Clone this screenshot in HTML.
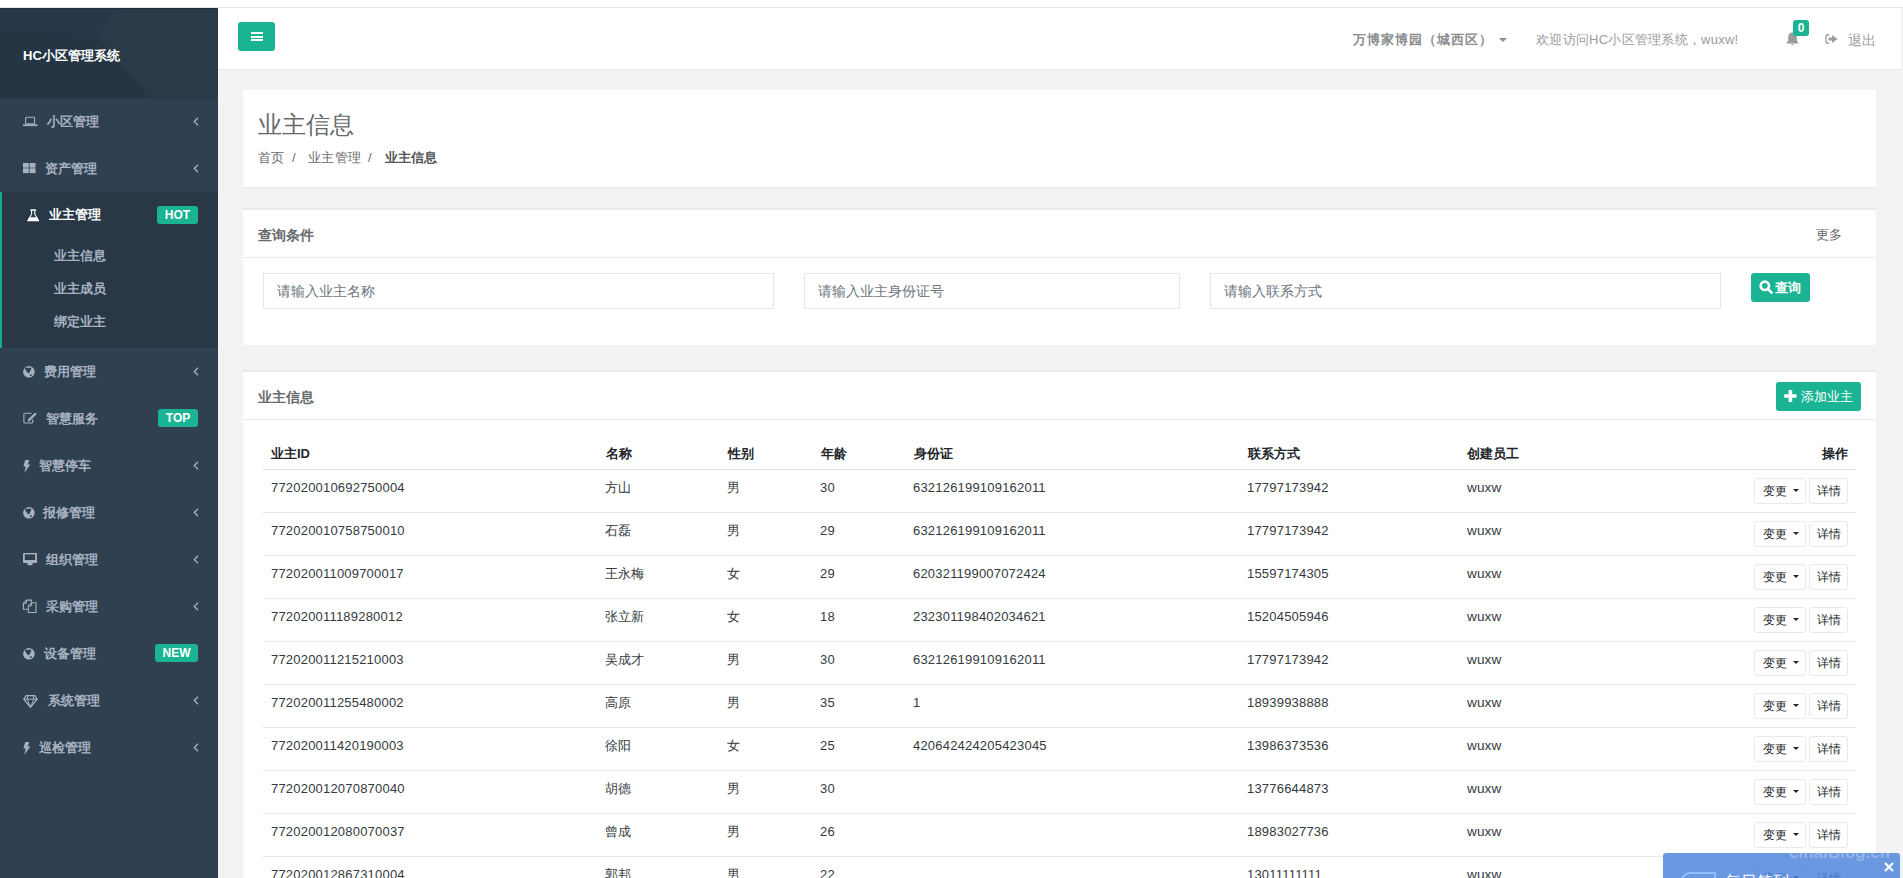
<!DOCTYPE html>
<html><head><meta charset="utf-8">
<style>
*{box-sizing:border-box;margin:0;padding:0}
html,body{width:1903px;height:878px;overflow:hidden}
body{background:#f3f3f4;font-family:"Liberation Sans",sans-serif;font-size:13px;color:#676a6c;position:relative}
.abs{position:absolute}
#topstrip{left:0;top:0;width:1903px;height:8px;background:#fff;border-bottom:1px solid #e3e5e8}
#side{left:0;top:8px;width:218px;height:870px;background:#2f4050;border-top:1px solid #1d2d3b}
#side .hdr{position:absolute;left:0;top:0;width:218px;height:90px;background:#273747;overflow:hidden}
.badge{position:absolute;height:18px;background:#1ab394;color:#fff;border-radius:3px;font-size:12px;font-weight:bold;text-align:center;line-height:18px}
#active{position:absolute;left:0;top:192px;width:218px;height:156px;background:#293846;border-left:2px solid #19aa8d}
.si{position:absolute;line-height:0}
.st{position:absolute;color:#a7b1c2;font-weight:bold;font-size:13px;line-height:18px;white-space:nowrap}
#header{left:218px;top:8px;width:1683px;height:62px;background:#fff;border-bottom:1px solid #e7eaec}
#minbtn{position:absolute;left:20px;top:14px;width:37px;height:29px;background:#1ab394;border-radius:3px}
#minbtn i{position:absolute;left:12.5px;width:12px;height:2px;background:#fff}
.card{position:absolute;left:243px;width:1633px;background:#fff}
.tx{position:absolute;white-space:nowrap;line-height:18px}
.th{position:absolute;white-space:nowrap;line-height:18px;font-weight:bold;color:#212529;font-size:13px}
.td{position:absolute;white-space:nowrap;line-height:18px;color:#343a40;font-size:13px;letter-spacing:0.2px}
.hl{position:absolute;left:263px;width:1593px;height:1px;background:#e7eaec}
.bw{position:absolute;height:26px;border:1px solid #e7eaec;border-radius:3px;background:#fff}
.bt{position:absolute;top:3px;line-height:18px;font-size:12px;color:#212529}
.caret{position:absolute;top:10px;width:0;height:0;border-left:3.5px solid transparent;border-right:3.5px solid transparent;border-top:3.5px solid #212529}
.input{position:absolute;top:273px;height:36px;border:1px solid #e5e6e7;background:#fff}
.input span{position:absolute;left:13px;top:8px;font-size:14px;line-height:18px;color:#6c757d;white-space:nowrap}
.btn{position:absolute;height:29px;background:#1ab394;border-radius:3px;color:#fff}
</style></head><body>
<div id="topstrip" class="abs"></div>
<div id="side" class="abs">
  <div class="hdr"><svg class="abs" style="left:0;top:0" width="218" height="90"><path d="M115 0H218V90H150L97 28Z" fill="#293a49"/><path d="M0 20C40 22 70 25 97 28L150 90H0Z" fill="#253544"/></svg><div class="tx" style="left:23px;top:38px;color:#fff;font-weight:bold">HC小区管理系统</div></div>
</div>
<div class="si" style="left:23px;top:116px"><svg width="15" height="11" viewBox="0 0 15 11"><rect x="2.6" y="1.3" width="9" height="6.6" rx="0.9" fill="none" stroke="#a7b1c2" stroke-width="1.1"/><rect x="0" y="8.3" width="14.4" height="1.8" fill="#a7b1c2"/></svg></div>
<div class="st" style="left:47px;top:113px">小区管理</div>
<div class="si" style="left:193px;top:117px"><svg width="6" height="9" viewBox="0 0 6 9"><path d="M5 0.8L1.3 4.5 5 8.2" fill="none" stroke="#a7b1c2" stroke-width="1.3"/></svg></div>
<div class="si" style="left:23px;top:163px"><svg width="13" height="11" viewBox="0 0 13 11"><rect x="0" y="0" width="5.8" height="4.7" fill="#a7b1c2"/><rect x="6.6" y="0" width="5.9" height="4.7" fill="#a7b1c2"/><rect x="0" y="5.3" width="5.8" height="4.8" fill="#a7b1c2"/><rect x="6.6" y="5.3" width="5.9" height="4.8" fill="#a7b1c2"/></svg></div>
<div class="st" style="left:45px;top:160px">资产管理</div>
<div class="si" style="left:193px;top:164px"><svg width="6" height="9" viewBox="0 0 6 9"><path d="M5 0.8L1.3 4.5 5 8.2" fill="none" stroke="#a7b1c2" stroke-width="1.3"/></svg></div>
<div class="si" style="left:23px;top:366px"><svg width="12" height="12" viewBox="0 0 12 12"><circle cx="5.9" cy="5.8" r="5.8" fill="#a7b1c2"/><path d="M1.9 2.2C2.6 1.2 4 1.3 4.9 2.1 5.8 1.3 7.3 1.1 8.2 1.9 8.4 3.4 7.2 5.4 5.8 7.6 4.3 6 2.3 4.3 1.9 2.2Z M7 8.5L8.9 8.2 8.5 9.9 7 10.1Z" fill="#2f4050"/></svg></div>
<div class="st" style="left:43.5px;top:363px">费用管理</div>
<div class="si" style="left:193px;top:367px"><svg width="6" height="9" viewBox="0 0 6 9"><path d="M5 0.8L1.3 4.5 5 8.2" fill="none" stroke="#a7b1c2" stroke-width="1.3"/></svg></div>
<div class="si" style="left:23px;top:412px"><svg width="14" height="12" viewBox="0 0 14 12"><path d="M8.6 1.2H2Q0.9 1.2 0.9 2.3V9.9Q0.9 11 2 11H8.6Q9.7 11 9.7 9.9V7.2" fill="none" stroke="#a7b1c2" stroke-width="1.1"/><path d="M6 8.2L12.2 2" stroke="#a7b1c2" stroke-width="2.4" stroke-linecap="round"/><path d="M4.8 9.6L5.4 7.4 7 9Z" fill="#a7b1c2"/></svg></div>
<div class="st" style="left:45.5px;top:410px">智慧服务</div>
<div class="badge" style="left:158px;top:409px;width:40px">TOP</div>
<div class="si" style="left:23px;top:460px"><svg width="8" height="13" viewBox="0 0 8 13"><path d="M2.2 0H6.4L4.6 4.6H7.4L1.2 13 2.8 6.6H0.4Z" fill="#a7b1c2"/></svg></div>
<div class="st" style="left:39px;top:457px">智慧停车</div>
<div class="si" style="left:193px;top:461px"><svg width="6" height="9" viewBox="0 0 6 9"><path d="M5 0.8L1.3 4.5 5 8.2" fill="none" stroke="#a7b1c2" stroke-width="1.3"/></svg></div>
<div class="si" style="left:23px;top:507px"><svg width="12" height="12" viewBox="0 0 12 12"><circle cx="5.9" cy="5.8" r="5.8" fill="#a7b1c2"/><path d="M1.9 2.2C2.6 1.2 4 1.3 4.9 2.1 5.8 1.3 7.3 1.1 8.2 1.9 8.4 3.4 7.2 5.4 5.8 7.6 4.3 6 2.3 4.3 1.9 2.2Z M7 8.5L8.9 8.2 8.5 9.9 7 10.1Z" fill="#2f4050"/></svg></div>
<div class="st" style="left:43px;top:504px">报修管理</div>
<div class="si" style="left:193px;top:508px"><svg width="6" height="9" viewBox="0 0 6 9"><path d="M5 0.8L1.3 4.5 5 8.2" fill="none" stroke="#a7b1c2" stroke-width="1.3"/></svg></div>
<div class="si" style="left:23px;top:553px"><svg width="15" height="13" viewBox="0 0 15 13"><rect x="0" y="0" width="14" height="10" rx="0.9" fill="#a7b1c2"/><rect x="1.8" y="1.4" width="10.4" height="5.6" fill="#2f4050"/><rect x="4.5" y="10" width="5" height="2.2" fill="#a7b1c2"/></svg></div>
<div class="st" style="left:46px;top:551px">组织管理</div>
<div class="si" style="left:193px;top:555px"><svg width="6" height="9" viewBox="0 0 6 9"><path d="M5 0.8L1.3 4.5 5 8.2" fill="none" stroke="#a7b1c2" stroke-width="1.3"/></svg></div>
<div class="si" style="left:22px;top:599px"><svg width="15" height="15" viewBox="0 0 15 15"><path d="M9.4 3.4V1.1H4.6L1.4 4.3V10.3H5.8" fill="none" stroke="#a7b1c2" stroke-width="1.1"/><path d="M4.6 1.1V4.3H1.4" fill="none" stroke="#a7b1c2" stroke-width="0.9"/><path d="M14 3.7V13.5H6.4V6.9L9.6 3.7Z" fill="none" stroke="#a7b1c2" stroke-width="1.1"/><path d="M9.6 3.7V6.9H6.4" fill="none" stroke="#a7b1c2" stroke-width="0.9"/></svg></div>
<div class="st" style="left:45.5px;top:598px">采购管理</div>
<div class="si" style="left:193px;top:602px"><svg width="6" height="9" viewBox="0 0 6 9"><path d="M5 0.8L1.3 4.5 5 8.2" fill="none" stroke="#a7b1c2" stroke-width="1.3"/></svg></div>
<div class="si" style="left:23px;top:648px"><svg width="12" height="12" viewBox="0 0 12 12"><circle cx="5.9" cy="5.8" r="5.8" fill="#a7b1c2"/><path d="M1.9 2.2C2.6 1.2 4 1.3 4.9 2.1 5.8 1.3 7.3 1.1 8.2 1.9 8.4 3.4 7.2 5.4 5.8 7.6 4.3 6 2.3 4.3 1.9 2.2Z M7 8.5L8.9 8.2 8.5 9.9 7 10.1Z" fill="#2f4050"/></svg></div>
<div class="st" style="left:43.5px;top:645px">设备管理</div>
<div class="badge" style="left:155px;top:644px;width:43px">NEW</div>
<div class="si" style="left:23px;top:694.5px"><svg width="15" height="13" viewBox="0 0 15 13"><path d="M3.2 0.7H11.8L14.2 4.2 7.5 12.2 0.8 4.2Z" fill="none" stroke="#a7b1c2" stroke-width="1.3"/><path d="M0.8 4.2H14.2M5 0.7L4.2 4.2 7.5 12.2 10.8 4.2 10 0.7" fill="none" stroke="#a7b1c2" stroke-width="1"/></svg></div>
<div class="st" style="left:47.5px;top:692px">系统管理</div>
<div class="si" style="left:193px;top:696px"><svg width="6" height="9" viewBox="0 0 6 9"><path d="M5 0.8L1.3 4.5 5 8.2" fill="none" stroke="#a7b1c2" stroke-width="1.3"/></svg></div>
<div class="si" style="left:23px;top:742px"><svg width="8" height="13" viewBox="0 0 8 13"><path d="M2.2 0H6.4L4.6 4.6H7.4L1.2 13 2.8 6.6H0.4Z" fill="#a7b1c2"/></svg></div>
<div class="st" style="left:39px;top:739px">巡检管理</div>
<div class="si" style="left:193px;top:743px"><svg width="6" height="9" viewBox="0 0 6 9"><path d="M5 0.8L1.3 4.5 5 8.2" fill="none" stroke="#a7b1c2" stroke-width="1.3"/></svg></div>
<div id="active"></div>
<div class="si" style="left:27px;top:209px"><svg width="13" height="13" viewBox="0 0 13 13"><rect x="3.3" y="0.3" width="5.8" height="1.5" fill="#fff"/><path d="M4.6 1.5V5.2L0.6 12M7.8 1.5V5.2L11.8 12" fill="none" stroke="#fff" stroke-width="1.1"/><path d="M0.2 12.2H12.2L9.8 8.2H2.6Z" fill="#fff"/></svg></div>
<div class="st" style="left:48.5px;top:206px;color:#fff">业主管理</div>
<div class="badge" style="left:157px;top:206px;width:41px">HOT</div>
<div class="st" style="left:54px;top:247px">业主信息</div>
<div class="st" style="left:54px;top:280px">业主成员</div>
<div class="st" style="left:54px;top:313px">绑定业主</div>
<div id="header" class="abs">
  <div id="minbtn"><i style="top:10px"></i><i style="top:13.5px"></i><i style="top:17px"></i></div>
  <div class="tx" style="left:1135px;top:23px;font-weight:bold;color:#8a8d90;letter-spacing:1px">万博家博园（城西区）</div>
  <div class="abs" style="left:1281px;top:30px;width:0;height:0;border-left:4px solid transparent;border-right:4px solid transparent;border-top:4px solid #8a8d90"></div>
  <div class="tx" style="left:1318px;top:22.5px;color:#999c9e;letter-spacing:0.25px">欢迎访问HC小区管理系统，wuxw!</div>
  <svg class="abs" style="left:1568px;top:24px" width="13" height="14" viewBox="0 0 13 14"><path d="M6.5 0.5C3.8 0.5 2.2 2.6 2.2 5.2V8.4L0.3 11.5H12.7L10.8 8.4V5.2C10.8 2.6 9.2 0.5 6.5 0.5Z M5 12.3A1.6 1.6 0 0 0 8 12.3Z" fill="#999c9e"/></svg>
  <div class="abs" style="left:1575px;top:12px;width:16px;height:16px;background:#1ab394;border-radius:3px;color:#fff;font-size:12px;font-weight:bold;text-align:center;line-height:16px">0</div>
  <svg class="abs" style="left:1607px;top:26px" width="13" height="10" viewBox="0 0 13 10"><path d="M4.2 0.8H2.6Q1 0.8 1 2.4V7.6Q1 9.2 2.6 9.2H4.2" fill="none" stroke="#999c9e" stroke-width="1.4"/><path d="M3.5 3.6H7V1L12.5 5 7 9V6.4H3.5Z" fill="#999c9e"/></svg>
  <div class="tx" style="left:1630px;top:22.5px;color:#999c9e;font-size:14px">退出</div>
</div>
<div class="card" style="top:90px;height:98px;border-bottom:1px solid #e7eaec">
  <div class="tx" style="left:15px;top:20px;font-size:24px;line-height:30px;font-weight:200;color:#676a6c">业主信息</div>
  <div class="tx" style="left:15px;top:58.5px;color:#676a6c">首页</div><div class="tx" style="left:49px;top:58.5px;color:#676a6c">/</div><div class="tx" style="left:65px;top:58.5px;color:#676a6c;letter-spacing:0.4px">业主管理</div><div class="tx" style="left:125px;top:58.5px;color:#676a6c">/</div><div class="tx" style="left:141.5px;top:58.5px;color:#555;font-weight:bold;letter-spacing:0.2px">业主信息</div>
</div>
<div class="card" style="top:208px;height:137px;border-top:2px solid #e7eaec">
  <div class="tx" style="left:15px;top:16px;font-size:14px;font-weight:bold;color:#676a6c">查询条件</div>
  <div class="tx" style="left:1573px;top:16px;color:#676a6c">更多</div>
  <div class="abs" style="left:0;top:47px;width:1633px;height:1px;background:#e7eaec"></div>
</div>
<div class="input" style="left:263px;width:511px"><span>请输入业主名称</span></div>
<div class="input" style="left:804px;width:376px"><span>请输入业主身份证号</span></div>
<div class="input" style="left:1210px;width:511px"><span>请输入联系方式</span></div>
<div class="btn" style="left:1751px;top:273px;width:59px">
  <svg class="abs" style="left:8px;top:7px" width="14" height="14" viewBox="0 0 14 14"><circle cx="5.8" cy="5.8" r="4.2" fill="none" stroke="#fff" stroke-width="2.6"/><path d="M8.8 8.8L12.6 12.6" stroke="#fff" stroke-width="2.6" stroke-linecap="round"/></svg>
  <div class="tx" style="left:24px;top:6px;font-weight:bold">查询</div>
</div>
<div class="card" style="top:370px;height:508px;border-top:2px solid #e7eaec">
  <div class="tx" style="left:15px;top:16px;font-size:14px;font-weight:bold;color:#676a6c">业主信息</div>
  <div class="abs" style="left:0;top:47px;width:1633px;height:1px;background:#e7eaec"></div>
</div>
<div class="btn" style="left:1776px;top:382px;width:85px">
  <svg class="abs" style="left:8px;top:8px" width="13" height="12" viewBox="0 0 13 12"><path d="M4.6 0H8.2V4.2H12.6V7.8H8.2V12H4.6V7.8H0.2V4.2H4.6Z" fill="#fff"/></svg>
  <div class="tx" style="left:25px;top:6px">添加业主</div>
</div>
<div class="th" style="left:271px;top:445px">业主ID</div>
<div class="th" style="left:606px;top:445px">名称</div>
<div class="th" style="left:728px;top:445px">性别</div>
<div class="th" style="left:821px;top:445px">年龄</div>
<div class="th" style="left:914px;top:445px">身份证</div>
<div class="th" style="left:1248px;top:445px">联系方式</div>
<div class="th" style="left:1467px;top:445px">创建员工</div>
<div class="th" style="left:1700px;top:445px;width:148px;text-align:right">操作</div>
<div class="hl" style="top:469px;background:#dedede"></div>
<div class="td" style="left:271px;top:479px">772020010692750004</div>
<div class="td" style="left:605px;top:479px">方山</div>
<div class="td" style="left:727px;top:479px">男</div>
<div class="td" style="left:820px;top:479px">30</div>
<div class="td" style="left:913px;top:479px">632126199109162011</div>
<div class="td" style="left:1247px;top:479px">17797173942</div>
<div class="td" style="left:1467px;top:478.5px;font-size:13.6px;letter-spacing:0.1px">wuxw</div>
<div class="bw" style="left:1754px;top:478px;width:52px"><span class="bt" style="left:8px">变更</span><i class="caret" style="left:38px"></i></div>
<div class="bw" style="left:1809px;top:478px;width:39px"><span class="bt" style="left:7px">详情</span></div>
<div class="hl" style="top:512px"></div>
<div class="td" style="left:271px;top:522px">772020010758750010</div>
<div class="td" style="left:605px;top:522px">石磊</div>
<div class="td" style="left:727px;top:522px">男</div>
<div class="td" style="left:820px;top:522px">29</div>
<div class="td" style="left:913px;top:522px">632126199109162011</div>
<div class="td" style="left:1247px;top:522px">17797173942</div>
<div class="td" style="left:1467px;top:521.5px;font-size:13.6px;letter-spacing:0.1px">wuxw</div>
<div class="bw" style="left:1754px;top:521px;width:52px"><span class="bt" style="left:8px">变更</span><i class="caret" style="left:38px"></i></div>
<div class="bw" style="left:1809px;top:521px;width:39px"><span class="bt" style="left:7px">详情</span></div>
<div class="hl" style="top:555px"></div>
<div class="td" style="left:271px;top:565px">772020011009700017</div>
<div class="td" style="left:605px;top:565px">王永梅</div>
<div class="td" style="left:727px;top:565px">女</div>
<div class="td" style="left:820px;top:565px">29</div>
<div class="td" style="left:913px;top:565px">620321199007072424</div>
<div class="td" style="left:1247px;top:565px">15597174305</div>
<div class="td" style="left:1467px;top:564.5px;font-size:13.6px;letter-spacing:0.1px">wuxw</div>
<div class="bw" style="left:1754px;top:564px;width:52px"><span class="bt" style="left:8px">变更</span><i class="caret" style="left:38px"></i></div>
<div class="bw" style="left:1809px;top:564px;width:39px"><span class="bt" style="left:7px">详情</span></div>
<div class="hl" style="top:598px"></div>
<div class="td" style="left:271px;top:608px">772020011189280012</div>
<div class="td" style="left:605px;top:608px">张立新</div>
<div class="td" style="left:727px;top:608px">女</div>
<div class="td" style="left:820px;top:608px">18</div>
<div class="td" style="left:913px;top:608px">232301198402034621</div>
<div class="td" style="left:1247px;top:608px">15204505946</div>
<div class="td" style="left:1467px;top:607.5px;font-size:13.6px;letter-spacing:0.1px">wuxw</div>
<div class="bw" style="left:1754px;top:607px;width:52px"><span class="bt" style="left:8px">变更</span><i class="caret" style="left:38px"></i></div>
<div class="bw" style="left:1809px;top:607px;width:39px"><span class="bt" style="left:7px">详情</span></div>
<div class="hl" style="top:641px"></div>
<div class="td" style="left:271px;top:651px">772020011215210003</div>
<div class="td" style="left:605px;top:651px">吴成才</div>
<div class="td" style="left:727px;top:651px">男</div>
<div class="td" style="left:820px;top:651px">30</div>
<div class="td" style="left:913px;top:651px">632126199109162011</div>
<div class="td" style="left:1247px;top:651px">17797173942</div>
<div class="td" style="left:1467px;top:650.5px;font-size:13.6px;letter-spacing:0.1px">wuxw</div>
<div class="bw" style="left:1754px;top:650px;width:52px"><span class="bt" style="left:8px">变更</span><i class="caret" style="left:38px"></i></div>
<div class="bw" style="left:1809px;top:650px;width:39px"><span class="bt" style="left:7px">详情</span></div>
<div class="hl" style="top:684px"></div>
<div class="td" style="left:271px;top:694px">772020011255480002</div>
<div class="td" style="left:605px;top:694px">高原</div>
<div class="td" style="left:727px;top:694px">男</div>
<div class="td" style="left:820px;top:694px">35</div>
<div class="td" style="left:913px;top:694px">1</div>
<div class="td" style="left:1247px;top:694px">18939938888</div>
<div class="td" style="left:1467px;top:693.5px;font-size:13.6px;letter-spacing:0.1px">wuxw</div>
<div class="bw" style="left:1754px;top:693px;width:52px"><span class="bt" style="left:8px">变更</span><i class="caret" style="left:38px"></i></div>
<div class="bw" style="left:1809px;top:693px;width:39px"><span class="bt" style="left:7px">详情</span></div>
<div class="hl" style="top:727px"></div>
<div class="td" style="left:271px;top:737px">772020011420190003</div>
<div class="td" style="left:605px;top:737px">徐阳</div>
<div class="td" style="left:727px;top:737px">女</div>
<div class="td" style="left:820px;top:737px">25</div>
<div class="td" style="left:913px;top:737px">420642424205423045</div>
<div class="td" style="left:1247px;top:737px">13986373536</div>
<div class="td" style="left:1467px;top:736.5px;font-size:13.6px;letter-spacing:0.1px">wuxw</div>
<div class="bw" style="left:1754px;top:736px;width:52px"><span class="bt" style="left:8px">变更</span><i class="caret" style="left:38px"></i></div>
<div class="bw" style="left:1809px;top:736px;width:39px"><span class="bt" style="left:7px">详情</span></div>
<div class="hl" style="top:770px"></div>
<div class="td" style="left:271px;top:780px">772020012070870040</div>
<div class="td" style="left:605px;top:780px">胡德</div>
<div class="td" style="left:727px;top:780px">男</div>
<div class="td" style="left:820px;top:780px">30</div>
<div class="td" style="left:1247px;top:780px">13776644873</div>
<div class="td" style="left:1467px;top:779.5px;font-size:13.6px;letter-spacing:0.1px">wuxw</div>
<div class="bw" style="left:1754px;top:779px;width:52px"><span class="bt" style="left:8px">变更</span><i class="caret" style="left:38px"></i></div>
<div class="bw" style="left:1809px;top:779px;width:39px"><span class="bt" style="left:7px">详情</span></div>
<div class="hl" style="top:813px"></div>
<div class="td" style="left:271px;top:823px">772020012080070037</div>
<div class="td" style="left:605px;top:823px">曾成</div>
<div class="td" style="left:727px;top:823px">男</div>
<div class="td" style="left:820px;top:823px">26</div>
<div class="td" style="left:1247px;top:823px">18983027736</div>
<div class="td" style="left:1467px;top:822.5px;font-size:13.6px;letter-spacing:0.1px">wuxw</div>
<div class="bw" style="left:1754px;top:822px;width:52px"><span class="bt" style="left:8px">变更</span><i class="caret" style="left:38px"></i></div>
<div class="bw" style="left:1809px;top:822px;width:39px"><span class="bt" style="left:7px">详情</span></div>
<div class="hl" style="top:856px"></div>
<div class="td" style="left:271px;top:866px">772020012867310004</div>
<div class="td" style="left:605px;top:866px">郭邦</div>
<div class="td" style="left:727px;top:866px">男</div>
<div class="td" style="left:820px;top:866px">22</div>
<div class="td" style="left:1247px;top:866px">13011111111</div>
<div class="td" style="left:1467px;top:865.5px;font-size:13.6px;letter-spacing:0.1px">wuxw</div>
<div class="bw" style="left:1754px;top:865px;width:52px"><span class="bt" style="left:8px">变更</span><i class="caret" style="left:38px"></i></div>
<div class="bw" style="left:1809px;top:865px;width:39px"><span class="bt" style="left:7px">详情</span></div>
<div class="abs" style="left:1663px;top:853px;width:237px;height:30px;background:rgba(80,135,220,0.85);border-radius:3px;overflow:hidden">
  <div class="tx" style="left:126px;top:-10px;font-size:17px;line-height:20px;font-weight:bold;color:rgba(255,255,255,0.28)">cihaiBlog.cn</div>
  <div class="abs" style="left:18px;top:18.5px;width:35px;height:30px;border:2px solid #8fbfff;border-radius:9px 0 0 0;border-right-width:2px"></div>
  <div class="tx" style="left:62px;top:19px;font-size:16px;line-height:20px;color:#fff">每日签到</div>
</div>
<svg class="abs" style="left:1884px;top:862px" width="10" height="10" viewBox="0 0 10 10"><path d="M1 1L9 9M9 1L1 9" stroke="#fff" stroke-width="2.2"/></svg>
</body></html>
